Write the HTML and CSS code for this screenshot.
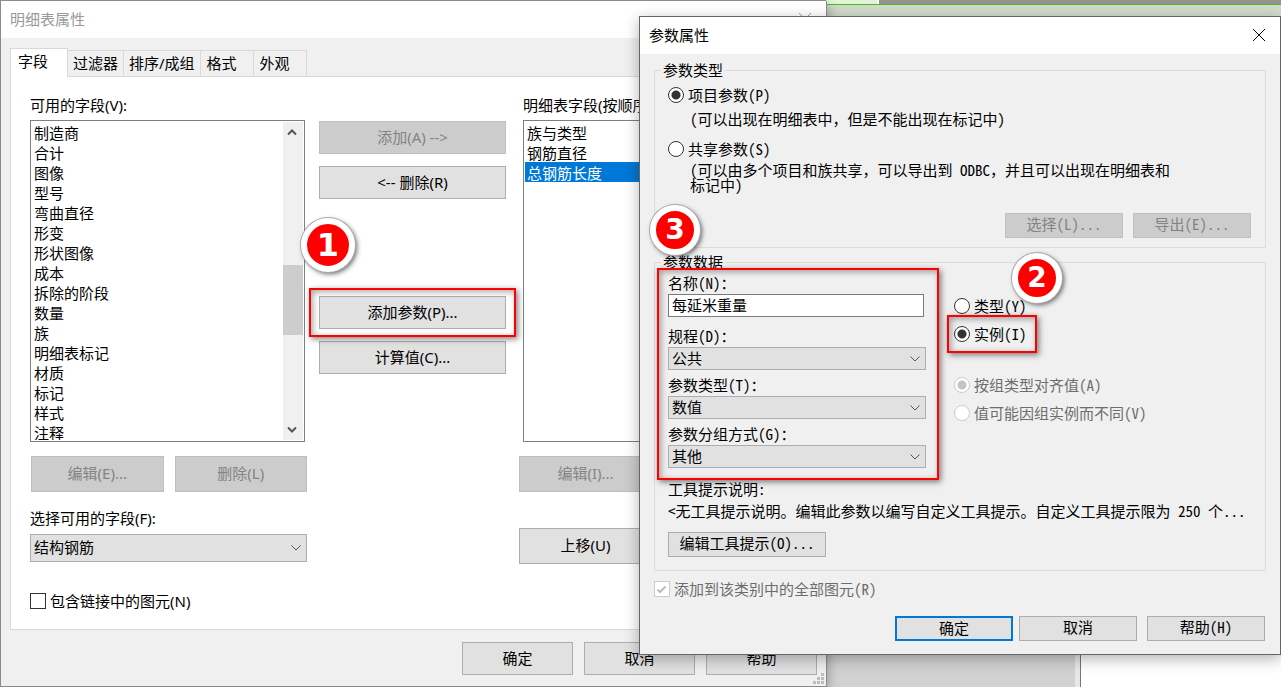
FILE: index.html
```
<!DOCTYPE html>
<html lang="zh-CN">
<head>
	<title>明细表属性</title>
	<meta charset="utf-8">
	<meta name="viewport" content="width=device-width, initial-scale=1">
	<link rel="stylesheet" href="styles.css">
</head>
<body>

	<!-- application behind the dialogs -->
	<div class="backdrop">
		<div class="ribbon"><span class="ribbon-tab"></span></div>
		<div class="ribbon-panel"></div>
		<div class="workspace">
			<div class="browser"></div>
			<div class="canvas"></div>
		</div>
	</div>

	<!-- schedule properties -->
	<div class="window schedule">
		<div class="titlebar">
			<span>明细表属性</span>
			<svg class="close" width="14" height="14" viewBox="0 0 14 14"><path d="M1 1L13 13M13 1L1 13"/></svg>
		</div>
		<div class="tabs">
			<button class="tab active">字段</button>
			<button class="tab">过滤器</button>
			<button class="tab">排序/成组</button>
			<button class="tab tab-wide">格式</button>
			<button class="tab tab-wide">外观</button>
		</div>
		<div class="panel">
			<div class="col available">
				<label for="available">可用的字段(V):</label>
				<div class="listbox">
					<select id="available" size="16">
						<option>制造商</option>
						<option>合计</option>
						<option>图像</option>
						<option>型号</option>
						<option>弯曲直径</option>
						<option>形变</option>
						<option>形状图像</option>
						<option>成本</option>
						<option>拆除的阶段</option>
						<option>数量</option>
						<option>族</option>
						<option>明细表标记</option>
						<option>材质</option>
						<option>标记</option>
						<option>样式</option>
						<option>注释</option>
					</select>
					<div class="scrollbar">
						<svg width="18" height="20" viewBox="0 0 18 20"><path d="M5 12.500L9 8.500L13 12.500"/></svg>
						<div class="track"><div class="thumb"></div></div>
						<svg width="18" height="20" viewBox="0 0 18 20"><path d="M5 7.500L9 11.500L13 7.500"/></svg>
					</div>
				</div>
				<div class="row">
					<button class="btn tall" disabled>编辑(E)...</button>
					<button class="btn tall" disabled>删除(L)</button>
				</div>
				<label for="category">选择可用的字段(F):</label>
				<div class="dropdown category">
					<select id="category"><option>结构钢筋</option></select>
					<svg width="12" height="8" viewBox="0 0 12 8"><path d="M1.500 1.500L6 6L10.500 1.500"/></svg>
				</div>
				<label class="check"><input type="checkbox">包含链接中的图元(N)</label>
			</div>
			<div class="col actions">
				<button class="btn" disabled>添加(A) --&gt;</button>
				<button class="btn">&lt;-- 删除(R)</button>
				<div class="marked add-param">
					<button class="btn">添加参数(P)...</button>
					<span class="frame"></span>
					<span class="badge badge-1">1</span>
				</div>
				<button class="btn">计算值(C)...</button>
			</div>
			<div class="col chosen">
				<label for="chosen">明细表字段(按顺序排列)(S):</label>
				<div class="listbox">
					<select id="chosen" size="16">
						<option>族与类型</option>
						<option>钢筋直径</option>
						<option selected>总钢筋长度</option>
					</select>
				</div>
				<button class="btn tall" disabled>编辑(I)...</button>
				<button class="btn tall move">上移(U)</button>
			</div>
		</div>
		<div class="footer">
			<button class="btn">确定</button>
			<button class="btn">取消</button>
			<button class="btn">帮助</button>
		</div>
		<svg class="grip" width="12" height="12" viewBox="0 0 12 12"><path d="M8 0h3v3h-3zM4 4h3v3h-3zM8 4h3v3h-3zM0 8h3v3h-3zM4 8h3v3h-3zM8 8h3v3h-3z"/></svg>
	</div>

	<!-- parameter properties -->
	<div class="window param">
		<div class="titlebar">
			<span>参数属性</span>
			<svg class="close" width="14" height="14" viewBox="0 0 14 14"><path d="M1 1L13 13M13 1L1 13"/></svg>
		</div>
		<div class="content">
			<fieldset class="kind">
				<legend>参数类型</legend>
				<label class="radio"><input type="radio" name="kind" checked>项目参数(P)</label>
				<p class="note">(可以出现在明细表中<span class="full">，</span>但是不能出现在标记中)</p>
				<label class="radio"><input type="radio" name="kind">共享参数(S)</label>
				<p class="note tight">(可以由多个项目和族共享<span class="full">，</span>可以导出到 ODBC<span class="full">，</span>并且可以出现在明细表和<br>标记中)</p>
				<div class="row">
					<button class="btn" disabled>选择(L)...</button>
					<button class="btn" disabled>导出(E)...</button>
				</div>
			</fieldset>

			<fieldset class="data">
				<legend>参数数据</legend>
				<div class="split">
					<div class="marked fields">
						<label for="name">名称(N)：</label>
						<input type="text" id="name" value="每延米重量">
						<label for="discipline">规程(D)：</label>
						<div class="dropdown">
							<select id="discipline"><option>公共</option></select>
							<svg width="12" height="8" viewBox="0 0 12 8"><path d="M1.500 1.500L6 6L10.500 1.500"/></svg>
						</div>
						<label for="type">参数类型(T)：</label>
						<div class="dropdown">
							<select id="type"><option>数值</option></select>
							<svg width="12" height="8" viewBox="0 0 12 8"><path d="M1.500 1.500L6 6L10.500 1.500"/></svg>
						</div>
						<label for="group">参数分组方式(G)：</label>
						<div class="dropdown">
							<select id="group"><option>其他</option></select>
							<svg width="12" height="8" viewBox="0 0 12 8"><path d="M1.500 1.500L6 6L10.500 1.500"/></svg>
						</div>
						<span class="frame"></span>
						<span class="badge badge-3">3</span>
					</div>
					<div class="binding">
						<label class="radio"><input type="radio" name="binding">类型(Y)</label>
						<div class="marked instance">
							<label class="radio"><input type="radio" name="binding" checked>实例(I)</label>
							<span class="frame"></span>
							<span class="badge badge-2">2</span>
						</div>
						<div class="vary">
							<label class="radio off"><input type="radio" name="vary" checked disabled>按组类型对齐值(A)</label>
							<label class="radio off"><input type="radio" name="vary" disabled>值可能因组实例而不同(V)</label>
						</div>
					</div>
				</div>
				<div class="tooltip">
					<p>工具提示说明:</p>
					<p>&lt;无工具提示说明。编辑此参数以编写自定义工具提示。自定义工具提示限为 250 个...</p>
					<button class="btn">编辑工具提示(O)...</button>
				</div>
			</fieldset>

			<label class="check off">
				<input type="checkbox" checked disabled>
				<svg class="tick" width="15" height="15" viewBox="0 0 15 15"><path d="M3.500 7.500L6 10L11.500 4.500"/></svg>
				添加到该类别中的全部图元(R)
			</label>
			<div class="footer">
				<button class="btn default">确定</button>
				<button class="btn">取消</button>
				<button class="btn help">帮助(H)</button>
			</div>
		</div>
	</div>

</body>
</html>
```
FILE: styles.css
```
* {
	box-sizing: border-box;
}
body {
	margin: 0;
	height: 100vh;
	overflow: hidden;
	position: relative;
	font-family: "Noto Sans", "Noto Sans CJK SC", sans-serif;
	font-size: 15px;
	line-height: 20px;
	color: #000;
}
button, input, select, option {
	font: inherit;
	color: inherit;
	margin: 0;
}
p {
	margin: 0;
}
svg {
	fill: none;
	stroke: #555;
}

/* application background */
.backdrop {
	height: 100%;
	display: flex;
	flex-direction: column;
	background-color: #9aa594;
}
.ribbon {
	height: 4px;
	background-color: #929292;
	padding-left: 826px;
}
.ribbon-tab {
	display: block;
	width: 53px;
	height: 4px;
	background-color: #e0f5d8;
	border-right: 2px solid #fff;
}
.ribbon-panel {
	height: 50px;
	background-color: #d0dccb;
	border-top: 1px solid #58b81a;
}
.workspace {
	flex: 1;
	display: flex;
}
.browser {
	width: 1081px;
	background-color: #d2d2d2;
	border-right: 1px solid #777;
	box-shadow: inset -5px 0 0 #e8e8e8;
}
.canvas {
	flex: 1;
	background-color: #fff;
}

/* windows */
.window {
	position: absolute;
	background-color: #f0f0f0;
}
.schedule {
	left: 0;
	top: 1px;
	width: 827px;
	border: 1px solid #8a8a8a;
	border-top: none;
	box-shadow: 2px 4px 10px rgba(0,0,0,0.25);
}
.param {
	left: 639px;
	right: 0;
	top: 16px;
	border: 1px solid #666;
	box-shadow: 0 4px 14px rgba(0,0,0,0.3);
	font-family: "Noto Sans CJK SC", sans-serif;
	font-feature-settings: "hwid";
}
.titlebar {
	display: flex;
	align-items: center;
	justify-content: space-between;
	height: 37px;
	padding: 0 14px 2px 9px;
	background-color: #fff;
}
.schedule .titlebar {
	color: #999;
}
.close {
	stroke: #000;
}
.schedule .close {
	stroke: #999;
}

/* tabs */
.tabs {
	display: flex;
	align-items: flex-end;
	padding: 10px 9px 0;
}
.tab {
	height: 26px;
	padding: 0 5px 2px;
	border: 1px solid #d9d9d9;
	border-left: none;
	border-bottom: none;
	background-color: #f0f0f0;
	white-space: nowrap;
}
.tab-wide {
	width: 53px;
	padding: 0 6px 2px;
	text-align: left;
}
.tab.active {
	position: relative;
	width: 58px;
	height: 29px;
	margin-bottom: -1px;
	padding: 0 7px 5px;
	border-left: 1px solid #d9d9d9;
	background-color: #fff;
	text-align: left;
}
.panel {
	display: flex;
	margin: 0 9px;
	padding: 18px 19px;
	background-color: #fff;
	border: 1px solid #d9d9d9;
}
.col {
	display: flex;
	flex-direction: column;
}
.available {
	flex: none;
	width: 277px;
}
.actions {
	flex: none;
	width: 187px;
	margin: 26px 13px 0 12px;
	gap: 12px;
}
.chosen {
	flex: 1;
	min-width: 0;
	align-items: flex-start;
}
.chosen label, .chosen .listbox {
	margin-left: 4px;
}
.col label {
	white-space: nowrap;
}

/* list boxes */
.listbox {
	display: flex;
	width: 275px;
	height: 322px;
	margin: 5px 0 14px;
	padding: 1px;
	border: 1px solid #7a7f88;
	background-color: #fff;
}
.listbox select {
	flex: 1;
	appearance: none;
	border: none;
	outline: none;
	padding: 0;
	overflow: hidden;
	background-color: #fff;
}
.listbox option {
	height: 20px;
	min-height: 20px;
	line-height: 18px;
	padding: 0 2px;
}
.listbox option:checked {
	background: linear-gradient(#0078d7, #0078d7);
	-webkit-text-fill-color: #fff;
}
.scrollbar {
	display: flex;
	flex-direction: column;
	width: 20px;
	background-color: #f0f0f0;
}
.scrollbar svg {
	stroke-width: 2;
}
.track {
	flex: 1;
	padding-top: 123px;
}
.thumb {
	height: 70px;
	background-color: #cdcdcd;
}

/* controls */
.row {
	display: flex;
}
.btn {
	height: 33px;
	padding: 0 0 2px;
	border: 1px solid #adadad;
	border-radius: 0;
	background-color: #e1e1e1;
	white-space: nowrap;
}
.btn:disabled {
	border-color: #bfbfbf;
	background-color: #ccc;
	color: #838383;
}
.btn.tall {
	width: 133px;
	height: 36px;
}
.available .row {
	gap: 11px;
	margin: 0 0 16px 1px;
}
.move {
	margin-top: 36px;
}
.dropdown {
	position: relative;
	height: 23px;
}
.dropdown.category {
	height: 28px;
	margin: 6px 0 29px;
}
.dropdown select {
	display: block;
	width: 100%;
	height: 100%;
	appearance: none;
	padding: 0 3px 2px;
	border: 1px solid #adadad;
	border-radius: 0;
	background-color: #e1e1e1;
}
.dropdown svg {
	position: absolute;
	right: 5px;
	top: calc(50% - 4px);
	pointer-events: none;
}
.check, .radio {
	display: flex;
	align-items: center;
	gap: 4px;
	position: relative;
}
.check input, .radio input {
	appearance: none;
	width: 16px;
	height: 16px;
	border: 1px solid #333;
	background-color: #fff;
}
.radio input {
	border-radius: 50%;
}
.radio input:checked {
	background-image: radial-gradient(circle, #333 4px, transparent 5px);
}
.off {
	color: #6d6d6d;
}
.check.off input, .radio.off input {
	border-color: #ccc;
}
.radio.off input:checked {
	background-image: radial-gradient(circle, #c4c4c4 4px, transparent 5px);
}
.tick {
	position: absolute;
	left: 0;
	stroke: #bbb;
	stroke-width: 2;
}
.footer {
	display: flex;
	justify-content: flex-end;
}
.schedule .footer {
	gap: 11px;
	padding: 12px 9px 11px;
}
.schedule .footer .btn {
	width: 111px;
}
.grip {
	position: absolute;
	right: 1px;
	bottom: 1px;
	fill: #bdbdbd;
	stroke: none;
}

/* parameter dialog */
.content {
	padding: 6px 14px 13px;
}
fieldset {
	min-width: 0;
	margin: 0;
	border: 1px solid #dcdcdc;
}
.kind {
	padding: 5px 14px 9px 13px;
}
.data {
	margin-top: 4px;
	padding: 1px 14px 13px 13px;
}
legend {
	margin-left: -7px;
	padding: 0 2px;
}
.full {
	font-feature-settings: normal;
}
.param .btn {
	width: 118px;
	height: 25px;
	padding-bottom: 3px;
}
.note {
	margin: 4px 0 10px;
	padding-left: 22px;
}
.note.tight {
	margin: 3px 0 21px;
	line-height: 15px;
}
.kind .row {
	justify-content: flex-end;
	gap: 10px;
}
.split {
	display: flex;
	gap: 28px;
}
.fields {
	width: 258px;
}
.fields label {
	display: block;
	margin-bottom: 1px;
}
.fields input {
	display: block;
	width: 256px;
	height: 23px;
	margin-bottom: 9px;
	padding: 0 3px 2px;
	border: 1px solid #7a7a7a;
	background-color: #fff;
}
.fields .dropdown {
	margin-bottom: 5px;
}
.binding {
	display: flex;
	flex-direction: column;
	align-items: flex-start;
	gap: 8px;
	padding-top: 23px;
	white-space: nowrap;
}
.vary {
	display: flex;
	flex-direction: column;
	gap: 8px;
	padding-top: 23px;
}
.tooltip {
	margin-top: 6px;
	white-space: nowrap;
}
.tooltip p {
	margin-bottom: 2px;
}
.param .tooltip .btn {
	width: 158px;
	margin-top: 9px;
}
.content > .check {
	margin: 8px 0 17px;
}
.content .footer {
	gap: 6px;
	padding-right: 1px;
}
.help {
	margin-left: 4px;
}
.param .btn.default {
	border: 2px solid #0078d7;
}

/* step markers */
.marked {
	position: relative;
}
.add-param {
	display: flex;
	flex-direction: column;
	margin-top: 85px;
}
.frame {
	position: absolute;
	border: 2px solid #f00;
	box-shadow: 2px 2px 6px rgba(0,0,0,0.5), inset 2px 2px 6px rgba(0,0,0,0.35);
	pointer-events: none;
}
.add-param .frame {
	inset: -8px -10px;
}
.fields .frame {
	inset: -5px -13px -7px -11px;
}
.instance .frame {
	inset: -9px -10px -9px -7px;
}
.badge {
	position: absolute;
	z-index: 1;
	width: 50px;
	height: 50px;
	border: 6px solid #fff;
	border-radius: 50%;
	background-color: #f00;
	box-shadow: 0 0 0 1px #aaa, 2px 2px 5px rgba(0,0,0,0.6);
	color: #fff;
	font: bold 28px/38px "DejaVu Sans", sans-serif;
	text-align: center;
}
.badge-1 {
	left: -18px;
	top: -78px;
	width: 54px;
	height: 54px;
	font-size: 32px;
	line-height: 42px;
}
.badge-2 {
	left: 58px;
	top: -71px;
}
.badge-3 {
	left: -18px;
	top: -68px;
}
```
